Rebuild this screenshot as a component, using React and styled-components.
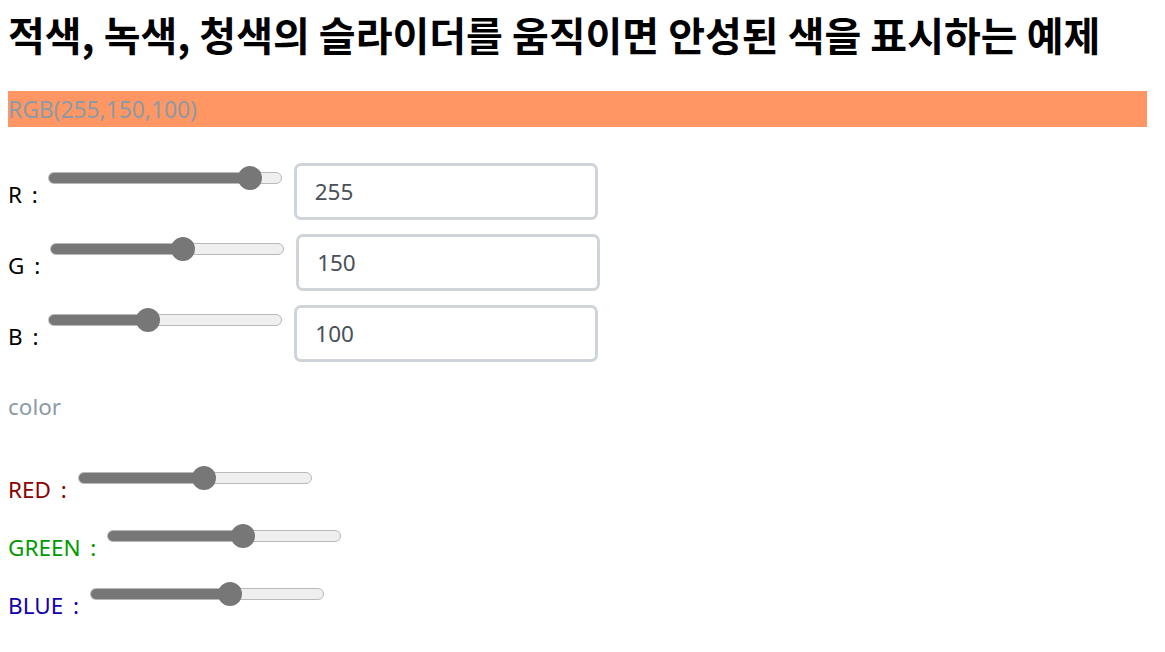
import React, { useState } from 'react';
import styled, { createGlobalStyle } from 'styled-components';

const GlobalStyle = createGlobalStyle`
  body {
    margin: 0;
    background: #fff;
    font-family: "Noto Sans", "Noto Sans CJK KR", sans-serif;
  }
`;

const Page = styled.div`
  padding: 8px 18px 8px 8px;
`;

const Title = styled.h1`
  margin: 2px 0 0;
  font-family: "Noto Sans CJK KR", sans-serif;
  font-size: 40px;
  font-weight: 700;
  line-height: 48px;
  color: #000;
`;

const ColorBar = styled.div`
  margin-top: 33px;
  height: 36px;
  line-height: 38px;
  font-size: 22.8px;
  color: #8b9ba6;
  background: ${(p) => p.$bg};
`;

const Controls = styled.div`
  margin-top: 36px;
  display: flex;
  flex-direction: column;
  gap: 14px;
`;

const Row = styled.div`
  display: flex;
  align-items: flex-start;
  height: 57px;
`;

const Label = styled.span`
  margin-top: 18px;
  font-size: 22.5px;
  line-height: 28px;
  word-spacing: 4px;
  color: ${(p) => p.$color || '#000'};
  white-space: pre;
`;

const Range = styled.input.attrs({ type: 'range' })`
  -webkit-appearance: none;
  appearance: none;
  width: 234px;
  height: 24px;
  margin: 3px 0 0 ${(p) => p.$gap || 0}px;
  padding: 0;
  background: transparent;

  &::-webkit-slider-runnable-track {
    height: 12px;
    border-radius: 6px;
    box-sizing: border-box;
    border: 1px solid #b9b9b9;
    background: linear-gradient(
      to right,
      #777 calc(12px + var(--p) * 210px),
      #efefef 0
    );
  }

  &::-webkit-slider-thumb {
    -webkit-appearance: none;
    width: 24px;
    height: 24px;
    margin-top: -7px;
    border-radius: 50%;
    background: #777;
    border: none;
  }
`;

const NumberBox = styled.input`
  box-sizing: border-box;
  width: 304px;
  height: 57px;
  margin-left: 12px;
  padding: 0 0 0 18px;
  border: 3px solid #cfd4da;
  border-radius: 7px;
  font-family: "Noto Sans", sans-serif;
  font-size: 22.5px;
  color: #495057;
  outline: none;
`;

const Caption = styled.div`
  margin-top: 31px;
  font-size: 22.5px;
  line-height: 28px;
  color: #8b9ba6;
`;

const Mixer = styled.div`
  margin-top: 42px;
  display: flex;
  flex-direction: column;
`;

const MixRow = styled.div`
  display: flex;
  align-items: flex-start;
  height: 58px;
`;

const MixLabel = styled(Label)`
  margin-top: 13px;
`;

const Slider = ({ pos, gap, style }) => (
  <Range
    min={0}
    max={1000}
    value={Math.round(pos * 1000)}
    readOnly
    $gap={gap}
    style={{ '--p': pos, ...style }}
  />
);

const toPos = (v) => (v + 32) / 316;

const App = () => {
  const [rgb, setRgb] = useState({ r: 255, g: 150, b: 100 });
  const bg = `rgb(${rgb.r},${rgb.g},${rgb.b})`;

  const setChannel = (key) => (e) => {
    const n = Math.max(0, Math.min(255, Number(e.target.value) || 0));
    setRgb({ ...rgb, [key]: n });
  };

  return (
    <Page>
      <GlobalStyle />
      <Title>적색, 녹색, 청색의 슬라이더를 움직이면 안성된 색을 표시하는 예제</Title>
      <ColorBar $bg={bg}>RGB({rgb.r},{rgb.g},{rgb.b})</ColorBar>

      <Controls>
        <Row>
          <Label>R : </Label>
          <Slider pos={toPos(rgb.r)} />
          <NumberBox value={rgb.r} onChange={setChannel('r')} />
        </Row>
        <Row>
          <Label>G : </Label>
          <Slider pos={toPos(rgb.g)} />
          <NumberBox value={rgb.g} onChange={setChannel('g')} />
        </Row>
        <Row>
          <Label>B : </Label>
          <Slider pos={toPos(rgb.b)} />
          <NumberBox value={rgb.b} onChange={setChannel('b')} />
        </Row>
      </Controls>

      <Caption>color</Caption>

      <Mixer>
        <MixRow>
          <MixLabel $color="#8b0000">RED : </MixLabel>
          <Slider pos={0.545} gap={1} />
        </MixRow>
        <MixRow>
          <MixLabel $color="#009a00">GREEN : </MixLabel>
          <Slider pos={0.592} gap={1} />
        </MixRow>
        <MixRow>
          <MixLabel $color="#1200aa">BLUE : </MixLabel>
          <Slider pos={0.612} gap={1} />
        </MixRow>
      </Mixer>
    </Page>
  );
};

export default App;
